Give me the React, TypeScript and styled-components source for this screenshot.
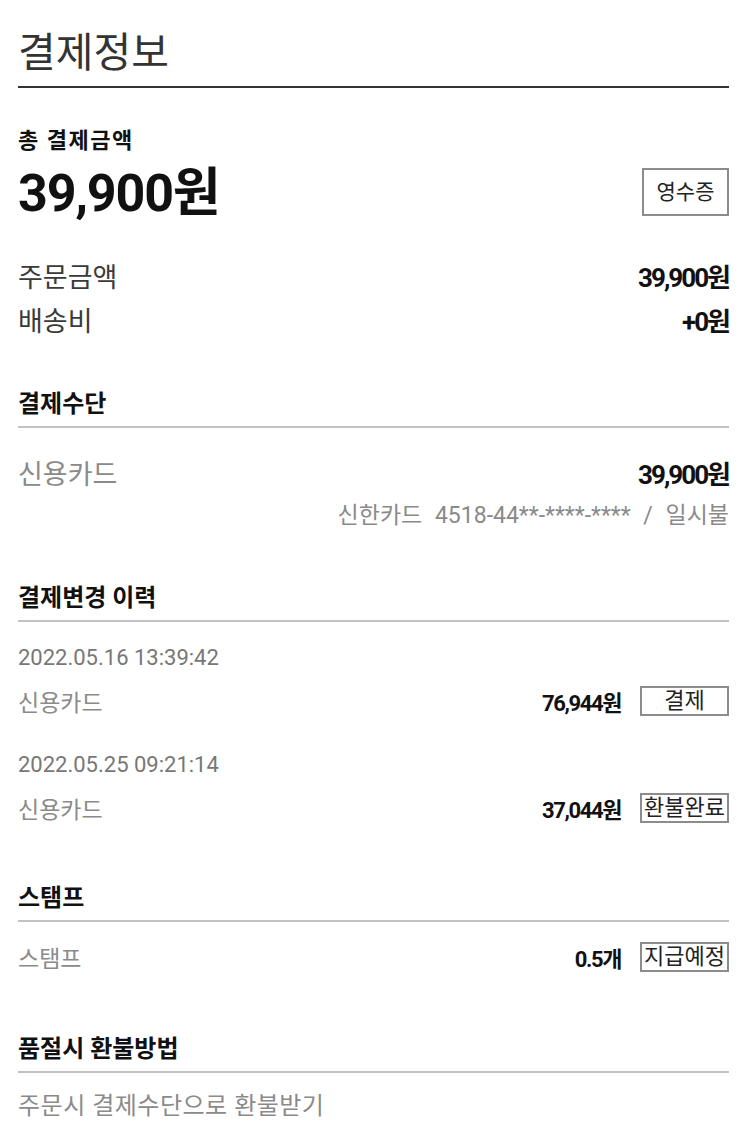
import React from "react";
import styled, { createGlobalStyle } from "styled-components";

const GlobalStyle = createGlobalStyle`
  html, body {
    margin: 0;
    padding: 0;
    background: #fff;
  }
  body {
    font-family: Roboto, "Noto Sans CJK KR", sans-serif;
    color: #222;
  }
`;

const Page = styled.div`
  width: 750px;
  box-sizing: border-box;
  padding: 0 21px 40px 18px;
`;

const Title = styled.h1`
  margin: 0;
  padding: 30px 0 10px;
  font-size: 41px;
  line-height: 46px;
  font-weight: 400;
  color: #333;
  border-bottom: 2px solid #333;
`;

const TotalLabel = styled.div`
  margin-top: 39px;
  font-size: 22px;
  line-height: 28px;
  font-weight: 700;
  letter-spacing: 1.5px;
  color: #111;
`;

const TotalRow = styled.div`
  margin-top: 13px;
  display: flex;
  justify-content: space-between;
  align-items: center;
  height: 48px;
`;

const TotalAmount = styled.div`
  font-size: 52px;
  line-height: 52px;
  font-weight: 700;
  letter-spacing: -1.2px;
  color: #111;
  padding-top: 3px;
`;

const OutlineButton = styled.button<{ $size?: "lg" | "sm" }>`
  box-sizing: border-box;
  margin: 0;
  padding: 0;
  background: #fff;
  border: 2px solid #8c8c8c;
  font-family: Roboto, "Noto Sans CJK KR", sans-serif;
  color: #222;
  cursor: pointer;
  width: ${(p) => (p.$size === "lg" ? "87px" : "89px")};
  height: ${(p) => (p.$size === "lg" ? "48px" : "30px")};
  font-size: ${(p) => (p.$size === "lg" ? "21px" : "22px")};
  line-height: 1;
  white-space: nowrap;
  flex-shrink: 0;
`;

const PriceList = styled.div`
  margin-top: 37px;
`;

const Row = styled.div<{ $h?: number }>`
  display: flex;
  justify-content: space-between;
  align-items: center;
  height: ${(p) => p.$h ?? 44}px;
`;

const Label = styled.span<{ $muted?: boolean; $size?: number }>`
  font-size: ${(p) => p.$size ?? 27}px;
  color: ${(p) => (p.$muted ? "#8a8a8a" : "#3a3a3a")};
`;

const Value = styled.span<{ $big?: boolean }>`
  font-size: ${(p) => (p.$big ? "26px" : "22px")};
  font-weight: 700;
  letter-spacing: ${(p) => (p.$big ? "-2px" : "-1.4px")};
  color: #111;
`;

const ValueGroup = styled.div`
  display: flex;
  align-items: center;
  gap: 19px;
`;

const Section = styled.section<{ $top: number }>`
  margin-top: ${(p) => p.$top}px;
`;

const SectionTitle = styled.h2`
  margin: 0;
  font-size: 24px;
  line-height: 30px;
  font-weight: 700;
  color: #111;
  padding-bottom: 7px;
  border-bottom: 2px solid #c2c2c2;
`;

const SectionBody = styled.div<{ $top: number }>`
  padding-top: ${(p) => p.$top}px;
`;

const CardInfo = styled.div`
  margin-top: 4px;
  text-align: right;
  font-size: 23px;
  line-height: 44px;
  color: #8a8a8a;
  word-spacing: 7px;
`;

const Entry = styled.div`
  & + & {
    margin-top: 34px;
  }
`;

const DateText = styled.div`
  font-size: 22px;
  line-height: 30px;
  color: #777;
  margin-bottom: 13px;
`;

const Note = styled.div`
  font-size: 24px;
  line-height: 30px;
  letter-spacing: 0.5px;
  color: #8a8a8a;
`;

const history = [
  { date: "2022.05.16 13:39:42", method: "신용카드", amount: "76,944원", status: "결제" },
  { date: "2022.05.25 09:21:14", method: "신용카드", amount: "37,044원", status: "환불완료" },
];

export default function App() {
  return (
    <Page>
      <GlobalStyle />
      <Title>결제정보</Title>

      <TotalLabel>총 결제금액</TotalLabel>
      <TotalRow>
        <TotalAmount>39,900원</TotalAmount>
        <OutlineButton $size="lg">영수증</OutlineButton>
      </TotalRow>

      <PriceList>
        <Row>
          <Label>주문금액</Label>
          <Value $big>39,900원</Value>
        </Row>
        <Row>
          <Label>배송비</Label>
          <Value $big>+0원</Value>
        </Row>
      </PriceList>

      <Section $top={48}>
        <SectionTitle>결제수단</SectionTitle>
        <SectionBody $top={26}>
          <Row $h={36}>
            <Label $muted>신용카드</Label>
            <Value $big>39,900원</Value>
          </Row>
          <CardInfo>신한카드 4518-44**-****-**** / 일시불</CardInfo>
        </SectionBody>
      </Section>

      <Section $top={45}>
        <SectionTitle>결제변경 이력</SectionTitle>
        <SectionBody $top={21}>
          {history.map((h) => (
            <Entry key={h.date}>
              <DateText>{h.date}</DateText>
              <Row $h={30}>
                <Label $muted $size={23}>
                  {h.method}
                </Label>
                <ValueGroup>
                  <Value>{h.amount}</Value>
                  <OutlineButton>{h.status}</OutlineButton>
                </ValueGroup>
              </Row>
            </Entry>
          ))}
        </SectionBody>
      </Section>

      <Section $top={60}>
        <SectionTitle>스탬프</SectionTitle>
        <SectionBody $top={20}>
          <Row $h={30}>
            <Label $muted $size={23}>
              스탬프
            </Label>
            <ValueGroup>
              <Value>0.5개</Value>
              <OutlineButton>지급예정</OutlineButton>
            </ValueGroup>
          </Row>
        </SectionBody>
      </Section>

      <Section $top={62}>
        <SectionTitle>품절시 환불방법</SectionTitle>
        <SectionBody $top={18}>
          <Note>주문시 결제수단으로 환불받기</Note>
        </SectionBody>
      </Section>
    </Page>
  );
}
